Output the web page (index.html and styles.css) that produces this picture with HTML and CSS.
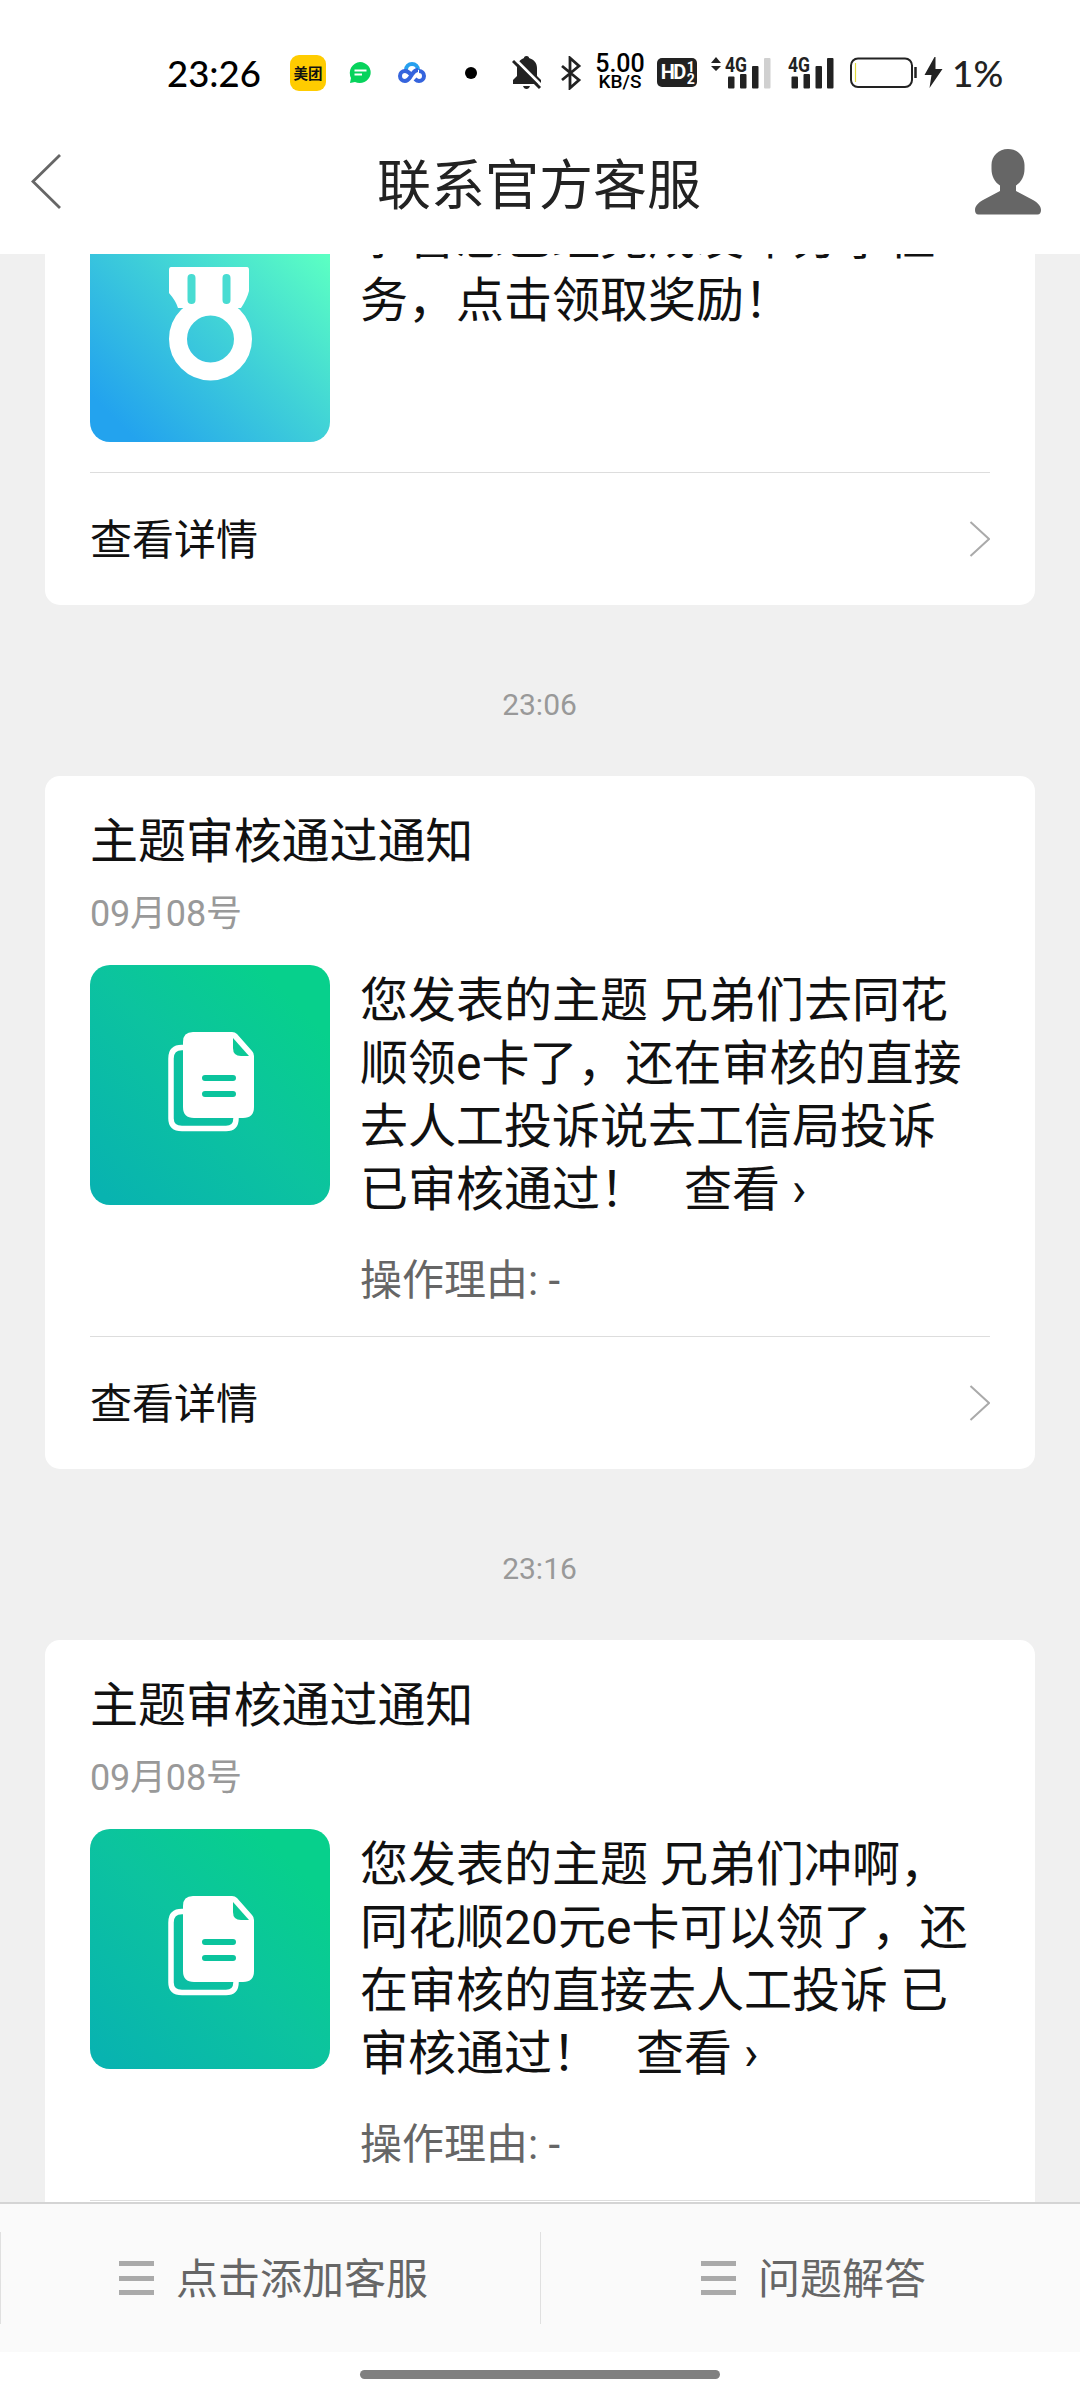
FILE: index.html
```html
<!DOCTYPE html>
<html lang="zh-CN">
<head>
<meta charset="utf-8">
<title>联系官方客服</title>
<link rel="stylesheet" href="styles.css">
</head>
<body>
<div class="screen">
  <div class="status">
    <span class="clock">23:26</span>
    <span class="meituan">美团</span>
    <svg class="chat-app" width="24" height="24" viewBox="0 0 24 24"><path d="M12 1a11 10.500 0 1 1-5 20L2 22l1-5A11 11 0 0 1 12 1z" fill="#07d35c"/><path d="M6.500 9.500h12M6.500 13.500h7.500" stroke="#fff" stroke-width="2"/></svg>
    <svg class="cloud-app" width="28" height="24" viewBox="0 0 28 24" fill="none" stroke-width="4"><path d="M8 9a6 6 0 0 1 12 0" stroke="#27a0ee"/><path d="M20 9c-4 0-5 3-7 6s-3 5-6 5a5 5 0 1 1 0-10c4 0 5 3 7 5M17 18c1 1 2 2 4 2a5 5 0 1 0 0-10" stroke="#3564dd"/></svg>
    <span class="dot"></span>
    <svg class="bell" width="30" height="34" viewBox="0 0 30 34"><path d="M14.500 0c2 0 2.500 1 2.500 2 5 1.500 8 5 8 10v8l4 4v4H1v-4l4-4v-8c0-5 3-8.500 7-10 0-1 .5-2 2.500-2z" fill="#222"/><path d="M11 30h7q-1 3-3.500 3T11 30z" fill="#222"/><path d="M3 3l28 28" stroke="#fff" stroke-width="3"/><path d="M1 5l27 27" stroke="#222" stroke-width="3"/></svg>
    <svg class="bt" width="22" height="34" viewBox="0 0 22 34" fill="none" stroke="#222" stroke-width="2.800"><path d="M2 10l17 14-9 8V2l9 8L2 24"/></svg>
    <span class="speed"><b>5.00</b><i>KB/S</i></span>
    <span class="hd">HD<span class="hd-n"><span>1</span><span>2</span></span></span>
    <svg class="sig1" width="60" height="34" viewBox="0 0 60 34" fill="#222"><path d="M0 7l5-6 5 6zM0 10h10l-5 5z"/><text x="14" y="16" class="net" textLength="22" lengthAdjust="spacingAndGlyphs">4G</text><rect x="17" y="20.500" width="6.500" height="12" rx="1"/><rect x="29" y="18" width="6.500" height="14.500" rx="1"/><rect x="41" y="10" width="6.500" height="22.500" rx="1"/><rect x="53" y="2" width="6.500" height="30.500" rx="1" fill="#d0d0d0"/></svg>
    <svg class="sig2" width="46" height="34" viewBox="0 0 46 34" fill="#222"><text x="0" y="16" class="net" textLength="22" lengthAdjust="spacingAndGlyphs">4G</text><rect x="3.500" y="20.500" width="6.500" height="12" rx="1"/><rect x="15.500" y="18" width="6.500" height="14.500" rx="1"/><rect x="27.500" y="10" width="6.500" height="22.500" rx="1"/><rect x="39" y="2" width="6.500" height="30.500" rx="1"/></svg>
    <svg class="batt" width="67" height="32" viewBox="0 0 67 32"><rect x="1" y="1.500" width="61" height="28.500" rx="7" fill="none" stroke="#222" stroke-width="2"/><path d="M5.500 6v19" stroke="#e2d93c" stroke-width="1.200"/><path d="M65.500 10v11" stroke="#222" stroke-width="2.500"/></svg>
    <svg class="bolt" width="19" height="32" viewBox="0 0 18 32"><path d="M10 0L0 18h7l-2 13L18 12h-7V0z" fill="#222"/></svg>
    <span class="pct">1%</span>
  </div>
  <header class="nav">
    <svg class="back" width="32" height="60" viewBox="0 0 32 60"><path d="M30 2L3 28.500 30 55" fill="none" stroke="#666" stroke-width="2.800"/></svg>
    <h1>联系官方客服</h1>
    <svg class="user" width="66" height="66" viewBox="0 0 66 66"><path d="M33 0c9.500 0 16.500 7 16.500 16v4c0 7-3 13-8.500 16.500v5.500l17 9c4.500 2.500 8 6 8 10 0 2.500-1 4.500-3.500 4.500h-59C1 65.500 0 63.500 0 61c0-4 3.500-7.500 8-10l17-9v-5.500C19.500 33 16.500 27 16.500 20v-4C16.500 7 23.500 0 33 0z" fill="#666"/></svg>
  </header>
  <main class="feed">
    <article class="card first">
      <h2>任务完成通知</h2>
      <p class="date">09月08号</p>
      <div class="body">
        <svg class="thumb" viewBox="0 0 240 240"><defs><linearGradient id="g1" x1="0" y1="1" x2="1" y2="0"><stop offset=".1" stop-color="#23a3ee"/><stop offset=".5" stop-color="#3fd0d8"/><stop offset=".88" stop-color="#5bffc3"/></linearGradient></defs><rect width="240" height="240" rx="20" fill="url(#g1)"/><path d="M81 65h76q2 0 2 3v21q-2 8-8 17H88q-2-7-9-15V68q0-3 2-3z" fill="#fff"/><circle cx="120.500" cy="137" r="32.500" fill="none" stroke="#fff" stroke-width="18"/><path d="M101.500 76v22M136.500 76v22" stroke="#48dcd2" stroke-width="8" stroke-linecap="round"/></svg>
        <div class="text"><p>恭喜您已经完成发布分享任<br>务，点击领取奖励！</p></div>
      </div>
      <a class="more"><span>查看详情</span><svg width="22" height="38" viewBox="0 0 22 38"><path d="M2.500 2L21 19 2.500 36" fill="none" stroke="#aaa" stroke-width="2"/></svg></a>
    </article>
    <time>23:06</time>
    <article class="card">
      <h2>主题审核通过通知</h2>
      <p class="date">09月08号</p>
      <div class="body">
        <svg class="thumb" viewBox="0 0 240 240"><defs><linearGradient id="g2" x1="0" y1="1" x2="1" y2="0"><stop offset=".05" stop-color="#08b3b0"/><stop offset=".5" stop-color="#0cc39f"/><stop offset=".85" stop-color="#07d08c"/></linearGradient></defs><rect width="240" height="240" rx="20" fill="url(#g2)"/><path d="M94 82.500h-2q-11 0-11 11v60q0 10 11 10h44q10 0 10-10v-3" fill="none" stroke="#fff" stroke-width="5.500"/><path d="M103 67h39q3 0 5 2l15 17q2 2 2 5v51q0 11-11 11h-49q-11 0-11-11V77q0-10 10-10z" fill="#fff"/><path d="M143 73v10q0 8 8 8h8z" fill="#0bc997"/><path d="M115 113h28M115 129h28" stroke="#0bc49d" stroke-width="6" stroke-linecap="round"/></svg>
        <div class="text"><p>您发表的主题 兄弟们去同花<br>顺领e卡了，还在审核的直接<br>去人工投诉说去工信局投诉<br>已审核通过！<span class="view">查看 ›</span></p><p class="reason">操作理由: -</p></div>
      </div>
      <a class="more"><span>查看详情</span><svg width="22" height="38" viewBox="0 0 22 38"><path d="M2.500 2L21 19 2.500 36" fill="none" stroke="#aaa" stroke-width="2"/></svg></a>
    </article>
    <time>23:16</time>
    <article class="card">
      <h2>主题审核通过通知</h2>
      <p class="date">09月08号</p>
      <div class="body">
        <svg class="thumb" viewBox="0 0 240 240"><rect width="240" height="240" rx="20" fill="url(#g2)"/><path d="M94 82.500h-2q-11 0-11 11v60q0 10 11 10h44q10 0 10-10v-3" fill="none" stroke="#fff" stroke-width="5.500"/><path d="M103 67h39q3 0 5 2l15 17q2 2 2 5v51q0 11-11 11h-49q-11 0-11-11V77q0-10 10-10z" fill="#fff"/><path d="M143 73v10q0 8 8 8h8z" fill="#0bc997"/><path d="M115 113h28M115 129h28" stroke="#0bc49d" stroke-width="6" stroke-linecap="round"/></svg>
        <div class="text"><p>您发表的主题 兄弟们冲啊，<br>同花顺20元e卡可以领了，还<br>在审核的直接去人工投诉 已<br>审核通过！<span class="view">查看 ›</span></p><p class="reason">操作理由: -</p></div>
      </div>
      <div class="more"></div>
    </article>
  </main>
  <footer class="menu">
    <a><span class="bars"></span><span class="label">点击添加客服</span></a>
    <a><span class="bars"></span><span class="label">问题解答</span></a>
  </footer>
  <div class="home"><span></span></div>
</div>
</body>
</html>
```

FILE: styles.css
```css
* { box-sizing: border-box; margin: 0; padding: 0; }
body { background: #fff; color: #111; font-family: Roboto, "Noto Sans CJK SC", sans-serif; }
.screen { width: 1080px; height: 2400px; overflow: hidden; display: flex; flex-direction: column; }
svg { display: block; flex: none; }

.status { height: 120px; padding: 25px 0 0 167px; display: flex; align-items: center; flex: none; color: #222; }
.status > * { flex: none; }
.clock { width: 123px; font: 500 36.500px/48px Lato, sans-serif; color: #000; white-space: nowrap; }
.meituan { width: 36px; height: 36px; border-radius: 9px; background: #fc0; color: #111; font: 700 14.500px/36px "Noto Sans CJK SC", sans-serif; text-align: center; margin-right: 22px; }
.chat-app { margin-right: 26px; }
.cloud-app { margin-right: 39px; }
.dot { width: 12px; height: 12px; border-radius: 50%; background: #000; margin-right: 35px; }
.bell { margin-right: 18px; }
.bt { margin-right: 13px; }
.speed { width: 50px; display: flex; flex-direction: column; align-items: center; color: #000; margin-right: 12px; }
.speed b { font: 500 25px/19px Roboto, sans-serif; }
.speed i { font: 500 19px/18px Roboto, sans-serif; }
.hd { width: 40px; height: 29px; border-radius: 5px; background: #222; color: #fff; display: flex; align-items: center; justify-content: center; font: 700 20px/29px Roboto, sans-serif; letter-spacing: -1.500px; margin-right: 14px; }
.hd-n { display: flex; flex-direction: column; font-size: 14px; line-height: 12px; margin-left: 2px; }
.net { font: 700 20px Roboto, sans-serif; }
.sig1 { overflow: visible; margin-right: 17px; }
.sig2 { overflow: visible; margin-right: 16px; }
.batt { margin-right: 7px; }
.bolt { margin-right: 9px; }
.pct { font: 500 37px/48px Lato, sans-serif; }

.nav { height: 134px; padding: 0 39px 8px 30px; display: flex; align-items: center; justify-content: space-between; flex: none; background: #fff; }
.nav h1 { font-weight: 400; font-size: 54px; line-height: 80px; color: #222; padding: 8px 0 0 41px; }
.user { position: relative; top: -1px; }

.feed { flex: 1; min-height: 0; overflow: hidden; background: #f0f0f0; padding: 0 45px; }
.card { height: 693px; background: #fff; border-radius: 15px; padding: 0 45px; display: flex; flex-direction: column; }
.first { height: 592px; margin-top: -241px; }
.card h2 { font-weight: 400; font-size: 48px; line-height: 60px; padding-top: 36px; letter-spacing: -.1px; }
.date { font-size: 36px; line-height: 44px; color: #999; padding-top: 20px; letter-spacing: -.2px; }
.body { display: flex; gap: 30px; margin-top: 29px; flex: 1; }
.thumb { width: 240px; height: 240px; }
.text { font-size: 48px; line-height: 63px; white-space: nowrap; padding-top: 4px; }
.view { margin-left: 36px; }
.reason { font-size: 42px; line-height: 56px; color: #666; margin-top: 32px; }
.more { height: 133px; border-top: 1px solid #ddd; display: flex; align-items: center; justify-content: space-between; font-size: 42px; line-height: 60px; }
.more span { padding-top: 4px; }
.feed time { display: block; height: 171px; padding: 28px 1px 0 0; line-height: 143px; font-size: 30px; color: #999; text-align: center; }

.menu { height: 150px; flex: none; background: #fafafa; border-top: 2px solid #d4d4d4; display: flex; align-items: center; }
.menu a { flex: 1; height: 92px; padding-left: 6px; border-left: 1px solid #e0e0e0; display: flex; align-items: center; justify-content: center; font-size: 42px; color: #666; }
.label { line-height: 60px; padding-top: 3px; }
.bars { width: 35px; height: 34px; margin-right: 22px; border-top: 5px solid #aaa; border-bottom: 5px solid #aaa; display: flex; align-items: center; }
.bars::before { content: ""; width: 100%; height: 5px; background: #aaa; }
.home { height: 48px; flex: none; display: flex; justify-content: center; padding-top: 18px; }
.home span { width: 360px; height: 9px; border-radius: 5px; background: #808080; }
```
